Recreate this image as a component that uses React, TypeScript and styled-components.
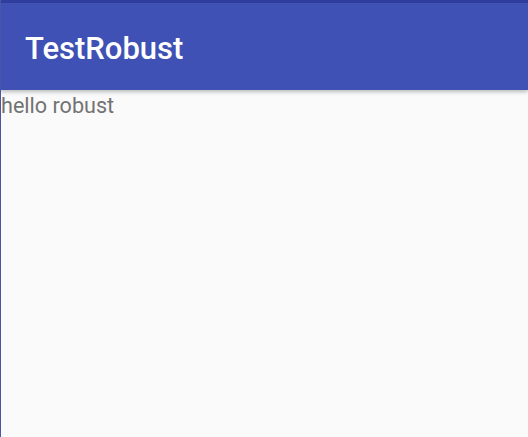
import React from "react";
import styled, { createGlobalStyle } from "styled-components";

const Global = createGlobalStyle`
  html, body { margin: 0; padding: 0; background: #fafafa; }
  body { font-family: Roboto, "Noto Sans", sans-serif; }
`;

const Screen = styled.div`
  width: 528px;
  height: 437px;
  background: #fafafa;
  display: flex;
  flex-direction: column;
  border-left: 1px solid #4a55a8;
  box-sizing: border-box;
  overflow: hidden;
`;

const StatusBar = styled.div`
  height: 3px;
  background: #303f9f;
  margin-left: -1px;
`;

const AppBar = styled.header`
  height: 87px;
  background: #3f51b5;
  margin-left: -1px;
  display: flex;
  align-items: center;
  padding-left: 25px;
  box-shadow: 0 2px 4px rgba(0, 0, 0, 0.25);
  position: relative;
  z-index: 1;
`;

const Title = styled.h1`
  margin: 0;
  font-family: Roboto, sans-serif;
  font-weight: 500;
  font-size: 31px;
  color: #ffffff;
  line-height: 1;
  padding-top: 3px;
`;

const Content = styled.main`
  flex: 1;
  padding: 4px 0 0 0;
`;

const Message = styled.p`
  margin: 0;
  font-family: Roboto, sans-serif;
  font-size: 21.6px;
  color: #737373;
  line-height: 24px;
`;

export default function App() {
  return (
    <>
      <Global />
      <Screen>
        <StatusBar />
        <AppBar>
          <Title>TestRobust</Title>
        </AppBar>
        <Content>
          <Message>hello robust</Message>
        </Content>
      </Screen>
    </>
  );
}
